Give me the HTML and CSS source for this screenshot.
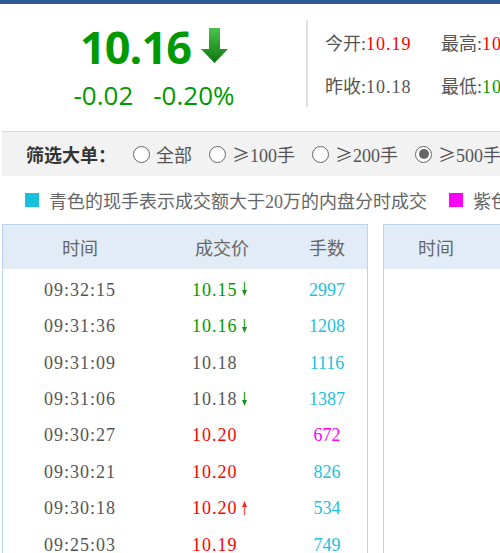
FILE: index.html
```html
<!DOCTYPE html>
<html lang="zh-CN">
<head>
<meta charset="utf-8">
<title>分时成交</title>
<link rel="stylesheet" href="styles.css">
</head>
<body>
<div class="topbar"></div>
<div class="page">
  <section class="quote">
    <div class="price-panel">
      <div class="last">
        <span class="last-num">10.16</span>
        <svg class="big-arrow" width="27" height="35" viewBox="0 0 27 35">
          <defs>
            <linearGradient id="ga" x1="0" y1="0" x2="0" y2="1">
              <stop offset="0" stop-color="#4cc24c"/>
              <stop offset="1" stop-color="#0c760c"/>
            </linearGradient>
          </defs>
          <path d="M8 0 H19 V21 H27 L13.5 35 L0 21 H8 Z" fill="url(#ga)"/>
        </svg>
      </div>
      <div class="change"><span>-0.02</span><span>-0.20%</span></div>
    </div>
    <div class="stats">
      <div class="stat-row">
        <div class="stat">今开:<span class="num up">10.19</span></div>
        <div class="stat">最高:<span class="num up">10.22</span></div>
      </div>
      <div class="stat-row">
        <div class="stat">昨收:<span class="num">10.18</span></div>
        <div class="stat">最低:<span class="num down">10.15</span></div>
      </div>
    </div>
  </section>

  <div class="filter">
    <span class="filter-label">筛选大单：</span>
    <label class="opt"><span class="radio"></span>全部</label>
    <label class="opt"><span class="radio"></span><span class="cjk">≥</span>100手</label>
    <label class="opt"><span class="radio"></span><span class="cjk">≥</span>200手</label>
    <label class="opt"><span class="radio checked"></span><span class="cjk">≥</span>500手</label>
  </div>

  <div class="legend">
    <span class="sq sq-cyan"></span><span class="legend-text">青色的现手表示成交额大于20万的内盘分时成交</span>
    <span class="sq sq-magenta"></span><span class="legend-text">紫色的现手表示成交额大于20万的外盘分时成交</span>
  </div>

  <div class="tables">
    <div class="ticks">
      <div class="thead">
        <div>时间</div><div>成交价</div><div>手数</div>
      </div>
      <div class="tbody">
        <div class="row"><div class="t">09:32:15</div><div class="p down">10.15<svg class="sarrow" width="5" height="14" viewBox="0 0 5 14"><rect x="1.8" y="0" width="1.4" height="9" fill="#3aa83a"/><path d="M0 8 H5 L2.5 14 Z" fill="#1f8f1f"/></svg></div><div class="q cyan">2997</div></div>
        <div class="row"><div class="t">09:31:36</div><div class="p down">10.16<svg class="sarrow" width="5" height="14" viewBox="0 0 5 14"><rect x="1.8" y="0" width="1.4" height="9" fill="#3aa83a"/><path d="M0 8 H5 L2.5 14 Z" fill="#1f8f1f"/></svg></div><div class="q cyan">1208</div></div>
        <div class="row"><div class="t">09:31:09</div><div class="p">10.18</div><div class="q cyan">1116</div></div>
        <div class="row"><div class="t">09:31:06</div><div class="p">10.18<svg class="sarrow" width="5" height="14" viewBox="0 0 5 14"><rect x="1.8" y="0" width="1.4" height="9" fill="#3aa83a"/><path d="M0 8 H5 L2.5 14 Z" fill="#1f8f1f"/></svg></div><div class="q cyan">1387</div></div>
        <div class="row"><div class="t">09:30:27</div><div class="p up">10.20</div><div class="q magenta">672</div></div>
        <div class="row"><div class="t">09:30:21</div><div class="p up">10.20</div><div class="q cyan">826</div></div>
        <div class="row"><div class="t">09:30:18</div><div class="p up">10.20<svg class="sarrow" width="5" height="14" viewBox="0 0 5 14"><rect x="1.8" y="5" width="1.4" height="9" fill="#ff5a5a"/><path d="M0 6 H5 L2.5 0 Z" fill="#ff2020"/></svg></div><div class="q cyan">534</div></div>
        <div class="row"><div class="t">09:25:03</div><div class="p up">10.19</div><div class="q cyan">749</div></div>
      </div>
    </div>
    <div class="ticks ticks-2">
      <div class="thead thead-2">
        <div>时间</div><div>成交价</div><div>手数</div>
      </div>
      <div class="tbody"></div>
    </div>
  </div>
</div>
</body>
</html>
```

FILE: styles.css
```css
html, body {
  margin: 0;
  padding: 0;
  width: 500px;
  height: 553px;
  overflow: hidden;
  background: #fff;
}

body {
  font-family: "Liberation Serif", "Noto Sans CJK SC", serif;
  font-size: 18px;
  color: #555;
}

.cjk {
  font-family: "Noto Sans CJK SC", sans-serif;
}

.topbar {
  height: 4px;
  background: #2f5896;
  width: 800px;
}

.page {
  margin-left: 2px;
  width: 800px;
}

/* quote */
.quote {
  display: flex;
  align-items: flex-start;
  padding-top: 16px;
  height: 111px;
}

.price-panel {
  width: 304px;
  display: flex;
  flex-direction: column;
  align-items: center;
  padding-top: 4px;
  font-family: "Open Sans", "Noto Sans", sans-serif;
  color: #009900;
}

.last {
  display: flex;
  align-items: flex-start;
  height: 45px;
}

.last-num {
  font-size: 45px;
  line-height: 45px;
  font-weight: 700;
  letter-spacing: -1px;
}

.big-arrow {
  margin-left: 10px;
  margin-top: 4px;
}

.change {
  display: flex;
  gap: 20px;
  margin-top: 13px;
  font-size: 26px;
  line-height: 26px;
  margin-left: 0;
}

.stats {
  border-left: 2px solid #dedede;
  height: 87px;
  padding-left: 17px;
  display: flex;
  flex-direction: column;
}

.stat-row {
  flex: 1;
  display: flex;
  align-items: center;
}

.stat {
  width: 116px;
  white-space: nowrap;
}

.num {
  letter-spacing: 1px;
}

.up { color: #ff0000; }
.down { color: #009900; }
.cyan { color: #22bfe0; }
.magenta { color: #ff00ff; }

/* filter */
.filter {
  border-top: 1px solid #c8dcef;
  background: #f2f2f2;
  height: 44px;
  display: flex;
  align-items: center;
  padding-left: 24px;
  white-space: nowrap;
}

.filter-label {
  font-weight: 700;
  color: #333;
  margin-right: 17px;
}

.opt {
  display: flex;
  align-items: center;
  margin-right: 17px;
  color: #555;
}

.radio {
  width: 15px;
  height: 15px;
  border: 1.5px solid #666;
  border-radius: 50%;
  background: #fff;
  margin-right: 6px;
  position: relative;
}

.radio.checked::after {
  content: "";
  position: absolute;
  left: 2.5px;
  top: 2.5px;
  width: 10px;
  height: 10px;
  border-radius: 50%;
  background: #666;
}

/* legend */
.legend {
  height: 48px;
  display: flex;
  align-items: center;
  padding-left: 23px;
  white-space: nowrap;
  color: #666;
}

.sq {
  width: 14px;
  height: 14px;
  margin-right: 10px;
  flex: none;
}

.sq-cyan { background: #17c1dc; }
.sq-magenta { background: #ff00ff; }

.legend-text {
  margin-right: 22px;
}

/* tables */
.tables {
  display: flex;
  gap: 15px;
  align-items: flex-start;
}

.ticks {
  width: 364px;
  border: 1px solid #bcd4ec;
  border-bottom: none;
  height: 400px;
}

.thead {
  display: grid;
  grid-template-columns: 154px 130px 80px;
  height: 44px;
  align-items: center;
  background: #e1ecf7;
  color: #666;
  font-family: "Noto Sans CJK SC", sans-serif;
  text-align: center;
}

.thead-2 {
  grid-template-columns: 104px 150px 110px;
}

.tbody {
  padding-top: 3px;
}

.row {
  display: grid;
  grid-template-columns: 154px 130px 80px;
  height: 36.45px;
  align-items: center;
}

.t {
  text-align: center;
  letter-spacing: 1px;
}

.p {
  padding-left: 35px;
  letter-spacing: 1px;
  display: flex;
  align-items: center;
}

.sarrow {
  margin-left: 4px;
  margin-top: -2px;
}

.q {
  text-align: center;
}
```
